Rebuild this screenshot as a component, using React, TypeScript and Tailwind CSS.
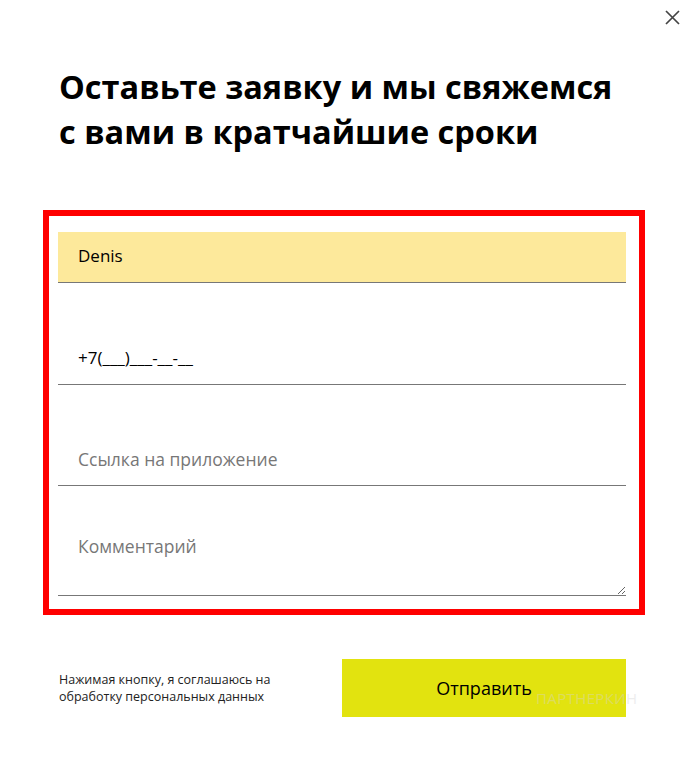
import { useState } from "react";

const App = () => {
  const [name, setName] = useState("Denis");
  const [phone, setPhone] = useState("+7(___)___-__-__");

  return (
    <div className="relative w-[688px] h-[768px] bg-white font-['Open_Sans',sans-serif] text-black">
      <button className="absolute right-[8px] top-[9px] w-[16px] h-[16px] flex items-center justify-center text-[#444]" aria-label="close">
        <svg width="15" height="15" viewBox="0 0 15 15" fill="none" stroke="currentColor" strokeWidth="1.7">
          <path d="M1 1 L14 14 M14 1 L1 14" />
        </svg>
      </button>

      <div className="px-[59px] pt-[64px]">
        <h1 className="text-[32.5px] font-bold leading-[45px]">
          Оставьте заявку и мы свяжемся
          <br />с вами в кратчайшие сроки
        </h1>
      </div>

      <div className="mx-[43px] mt-[56px] border-[6px] border-[#ff0000] pl-[9px] pr-[13px] pt-[16px] pb-[13px]">
        <div className="flex flex-col">
          <input
            className="h-[51px] bg-[#fde99b] border-b border-[#777] px-[20px] pb-[3px] text-[17px] outline-none"
            value={name}
            onChange={(e) => setName(e.target.value)}
          />
          <input
            className="mt-[51px] h-[51px] border-b border-[#777] px-[20px] pb-[3px] text-[17px] outline-none"
            value={phone}
            onChange={(e) => setPhone(e.target.value)}
          />
          <input
            className="mt-[50px] h-[51px] border-b border-[#777] px-[20px] pb-[3px] text-[17.5px] outline-none placeholder:text-[#777]"
            placeholder="Ссылка на приложение"
          />
          <textarea
            className="mt-[48px] h-[62px] border-b border-[#777] px-[20px] pt-0 text-[17.5px] leading-[24px] outline-none placeholder:text-[#777]"
            placeholder="Комментарий"
          />
        </div>
      </div>

      <div className="flex items-center justify-between pl-[59px] pr-[62px] mt-[44px]">
        <p className="text-[12.5px] leading-[17px] text-[#222] w-[230px]">
          Нажимая кнопку, я соглашаюсь на обработку персональных данных
        </p>
        <div className="relative">
          <button className="w-[284px] h-[58px] bg-[#e2e30f] text-[18px] font-medium">Отправить</button>
          <span className="pointer-events-none absolute left-[194px] top-[31px] text-[15px] leading-[16px] tracking-wide text-[#d4d4d4] opacity-40">
            ПАРТНЕРКИН
          </span>
        </div>
      </div>
    </div>
  );
};

export default App;
